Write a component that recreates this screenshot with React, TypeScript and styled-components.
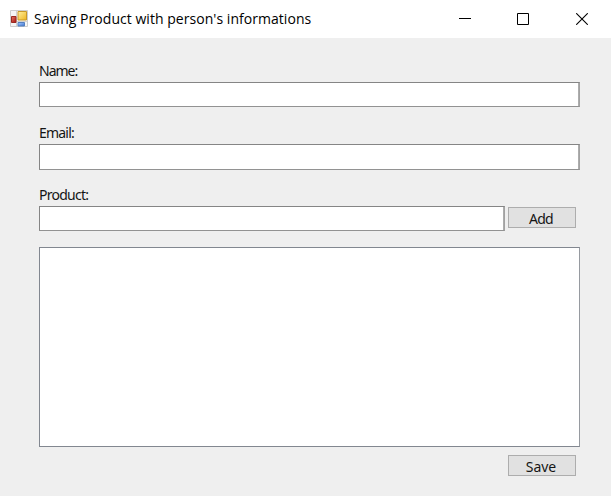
import React from "react";
import styled, { createGlobalStyle } from "styled-components";

const GlobalStyle = createGlobalStyle`
  * { box-sizing: border-box; }
  body { margin: 0; background: #efefef; overflow: hidden; }
`;

const Window = styled.main`
  width: 611px;
  height: 496px;
  background: #efefef;
  color: #151515;
  font-family: "Open Sans", "Noto Sans", sans-serif;
`;

const TitleBar = styled.header`
  display: flex;
  align-items: center;
  height: 38px;
  padding-left: 10px;
  background: #fff;
`;

const Title = styled.h1`
  flex: 1;
  margin: 0 0 0 6px;
  color: #000;
  font-size: 14px;
  font-weight: 400;
  line-height: 20px;
  letter-spacing: 0.04px;
  white-space: nowrap;
`;

const WindowControls = styled.div`
  display: flex;
  width: 175px;
  height: 38px;
`;

const ControlButton = styled.button<{ $width: number }>`
  display: flex;
  align-items: center;
  justify-content: center;
  width: ${({ $width }) => $width}px;
  border: 0;
  padding: 0;
  background: transparent;
`;

const Form = styled.form`
  display: flex;
  flex-direction: column;
  padding: 24px 31px 0 39px;
`;

const Field = styled.div<{ $height: number }>`
  display: flex;
  flex-direction: column;
  height: ${({ $height }) => $height}px;
`;

const Label = styled.label<{ $spacing: number }>`
  flex: 0 0 20px;
  height: 20px;
  font-family: "Noto Sans", sans-serif;
  font-size: 14px;
  line-height: 17px;
  letter-spacing: ${({ $spacing }) => $spacing}px;
`;

const TextInput = styled.input<{ $width?: number; $height?: number }>`
  flex: none;
  width: ${({ $width }) => $width ?? 541}px;
  height: ${({ $height }) => $height ?? 25}px;
  border: 1px solid #858585;
  border-right-color: #a2a2a2;
  border-bottom-color: #929292;
  border-radius: 0;
  padding: 3px;
  background: #fff;
  box-shadow: inset -1px 0 #adadad;
  outline: none;
`;

const InputRow = styled.div`
  display: flex;
  align-items: flex-start;
  gap: 3px;
`;

const ActionButton = styled.button<{ $top: number; $spacing: number }>`
  width: 68px;
  height: 21px;
  margin-top: ${({ $top }) => $top}px;
  border: 1px solid #adadad;
  border-radius: 0;
  padding: 3px 2px 0 0;
  background: #e1e1e1;
  color: #151515;
  font-family: "Noto Sans", sans-serif;
  font-size: 14px;
  line-height: 16px;
  letter-spacing: ${({ $spacing }) => $spacing}px;
`;

const ProductList = styled.div`
  width: 541px;
  height: 200px;
  border: 1px solid #828790;
  border-right-color: #969aa0;
  background: #fff;
`;

const Footer = styled.footer`
  display: flex;
  padding-left: 469px;
`;

const AppIcon = () => (
  <svg width="18" height="18" viewBox="0 0 18 18" aria-hidden="true">
    <defs>
      <linearGradient id="gold" x2="1" y2="1">
        <stop stopColor="#fff0a0" />
        <stop offset="1" stopColor="#eeb51f" />
      </linearGradient>
      <linearGradient id="blue" x2="1" y2="1">
        <stop stopColor="#a9ccff" />
        <stop offset="1" stopColor="#3d72cf" />
      </linearGradient>
      <linearGradient id="red" x2="1" y2="1">
        <stop stopColor="#e77763" />
        <stop offset="1" stopColor="#a41512" />
      </linearGradient>
    </defs>
    <path d="M.5.5h17v16H.5z" fill="#f5f5f5" stroke="#cdcdcd" />
    <path d="M6.5 1v15M1 11.5h16" stroke="#d2d2d2" />
    <path d="M8 1.5h8.5V10H8z" fill="url(#gold)" stroke="#c99928" />
    <path d="M1.5 6.5h4.5v6H1.5z" fill="url(#red)" stroke="#9b2922" />
    <path d="M8 12.5h6.5v3.5H8z" fill="url(#blue)" stroke="#5480be" />
  </svg>
);

export default function App() {
  return (
    <Window>
      <GlobalStyle />
      <TitleBar>
        <AppIcon />
        <Title>Saving Product with person's informations</Title>
        <WindowControls>
          <ControlButton $width={58} aria-label="Minimize">
            <svg width="12" height="12" viewBox="0 0 12 12"><path d="M0 5.5h12" stroke="#000" /></svg>
          </ControlButton>
          <ControlButton $width={58} aria-label="Maximize">
            <svg width="12" height="12" viewBox="0 0 12 12"><path d="M.5.5h11v11H.5z" fill="none" stroke="#000" /></svg>
          </ControlButton>
          <ControlButton $width={59} aria-label="Close">
            <svg width="12" height="12" viewBox="0 0 12 12"><path d="m.2.2 11.6 11.6m0-11.6L.2 11.8" stroke="#000" strokeWidth="1.1" /></svg>
          </ControlButton>
        </WindowControls>
      </TitleBar>
      <Form onSubmit={(event) => event.preventDefault()}>
        <Field $height={62}>
          <Label htmlFor="name" $spacing={-1}>Name:</Label>
          <TextInput id="name" />
        </Field>
        <Field $height={62}>
          <Label htmlFor="email" $spacing={-0.8}>Email:</Label>
          <TextInput id="email" $height={26} />
        </Field>
        <Field $height={61}>
          <Label htmlFor="product" $spacing={-0.75}>Product:</Label>
          <InputRow>
            <TextInput id="product" $width={466} />
            <ActionButton type="button" $top={1} $spacing={-0.8}>Add</ActionButton>
          </InputRow>
        </Field>
        <ProductList />
        <Footer>
          <ActionButton type="submit" $top={8} $spacing={0}>Save</ActionButton>
        </Footer>
      </Form>
    </Window>
  );
}
